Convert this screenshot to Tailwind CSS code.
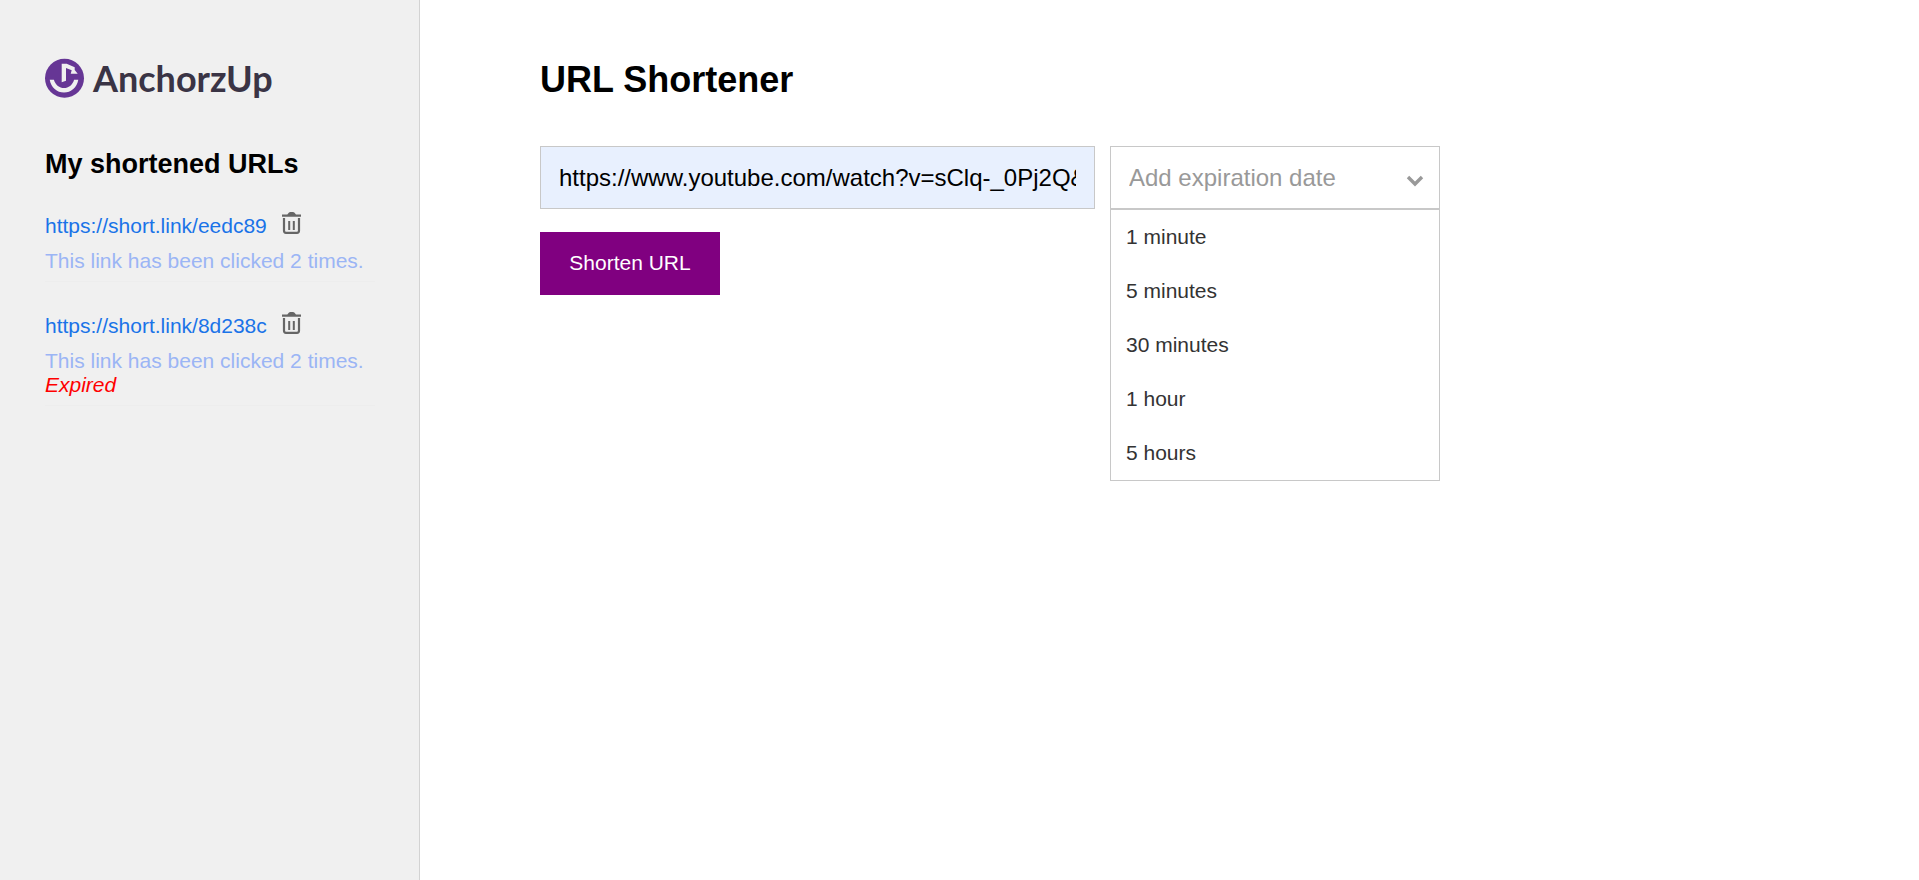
<!DOCTYPE html>
<html lang="en">
<head>
<meta charset="utf-8">
<meta name="viewport" content="width=device-width, initial-scale=1">
<title>URL Shortener</title>
<script src="https://cdn.jsdelivr.net/npm/@tailwindcss/browser@4"></script>
</head>
<body class="flex min-h-screen bg-white font-['Liberation_Sans',Arial,sans-serif] text-[21px] leading-6 text-black">
<svg class="hidden">
  <symbol id="trash" viewBox="0 0 24 24">
    <path fill="#666" d="M3 4.500h5.300L10 2.600Q10.500 2 11.300 2h2.700q.8 0 1.300.6L17 4.500h5v2.200H3z"/>
    <path fill="none" stroke="#666" stroke-width="2.200" d="M5 8v12.800a2 2 0 0 0 2 2h11a2 2 0 0 0 2-2V8"/>
    <path fill="none" stroke="#666" stroke-width="2" d="M10.200 11v9M14.800 11v9"/>
  </symbol>
</svg>
<aside class="w-[420px] shrink-0 border-r border-[#d3d3d3] bg-[#f0f0f0] pl-[45px] pr-11 pt-[58px]">
  <a href="#" class="flex h-10 items-center gap-2">
    <svg class="size-10 shrink-0" viewBox="0 0 40 40" aria-hidden="true">
      <circle cx="19.500" cy="20.300" r="19.500" fill="#663695"/>
      <path fill="#f0f0f0" d="M16.700 5.700h5L29.700 9.300V12l3 3.700h-7l1-3.400L21 10v12.700l-4.300 1.600z"/>
      <path fill="#f0f0f0" d="M4.700 21.700h4.200C10.500 27 14.500 30 19 30s8.500-3 10.100-8.300h4.200C32 29.500 26 34.500 19 34.500S6 29.500 4.700 21.700z"/>
    </svg>
    <span class="font-['Lato',sans-serif] text-4xl font-bold leading-9 text-[#3a3445]">AnchorzUp</span>
  </a>
  <h2 class="mt-[50px] text-[27px] font-bold leading-8">My shortened URLs</h2>
  <ul class="mt-[30px] flex flex-col gap-7">
    <li class="border-b border-[#ededed] pb-2">
      <div class="flex items-start gap-3">
        <a href="#" class="pt-1 text-[#1a73e8]">https://short.link/eedc89</a>
        <button type="button" aria-label="Delete link eedc89"><svg class="size-6"><use href="#trash"/></svg></button>
      </div>
      <p class="mt-[11px] text-[#9bb5f5]">This link has been clicked 2 times.</p>
    </li>
    <li class="border-b border-[#ededed] pb-2">
      <div class="flex items-start gap-3">
        <a href="#" class="pt-1 text-[#1a73e8]">https://short.link/8d238c</a>
        <button type="button" aria-label="Delete link 8d238c"><svg class="size-6"><use href="#trash"/></svg></button>
      </div>
      <p class="mt-[11px] text-[#9bb5f5]">This link has been clicked 2 times.</p>
      <p class="italic text-[#ff0000]">Expired</p>
    </li>
  </ul>
</aside>
<main class="min-w-0 flex-1 pl-[120px] pt-[60px]">
  <h1 class="text-4xl font-bold leading-10">URL Shortener</h1>
  <form class="mt-[46px]">
    <div class="flex gap-[15px] text-2xl">
      <input type="text" aria-label="URL to shorten" value="https://www.youtube.com/watch?v=sClq-_0Pj2Q&amp;ab_channel=Music" class="h-[63px] w-[555px] border border-[#c8c8c8] bg-[#e8f0fe] px-[18px]">
      <div class="relative w-[330px]">
        <select aria-label="Expiration date" class="h-[63px] w-full appearance-none border border-[#c8c8c8] bg-white px-[18px] text-[#999]">
          <option>Add expiration date</option>
        </select>
        <svg class="pointer-events-none absolute right-4 top-[29px] h-3 w-[18px]" viewBox="0 0 18 12" aria-hidden="true"><path fill="none" stroke="#999" stroke-width="3.400" d="M2 2l7 7 7-7"/></svg>
        <ul role="listbox" aria-label="Expiration options" class="absolute inset-x-0 top-full border border-[#c8c8c8] bg-white text-[21px] leading-6 text-[#333]">
          <li role="option" class="p-[15px]">1 minute</li>
          <li role="option" class="p-[15px]">5 minutes</li>
          <li role="option" class="p-[15px]">30 minutes</li>
          <li role="option" class="p-[15px]">1 hour</li>
          <li role="option" class="p-[15px]">5 hours</li>
        </ul>
      </div>
    </div>
    <button type="button" class="mt-[23px] h-[63px] w-[180px] bg-[#800080] pb-0.5 text-white">Shorten URL</button>
  </form>
</main>
</body>
</html>
